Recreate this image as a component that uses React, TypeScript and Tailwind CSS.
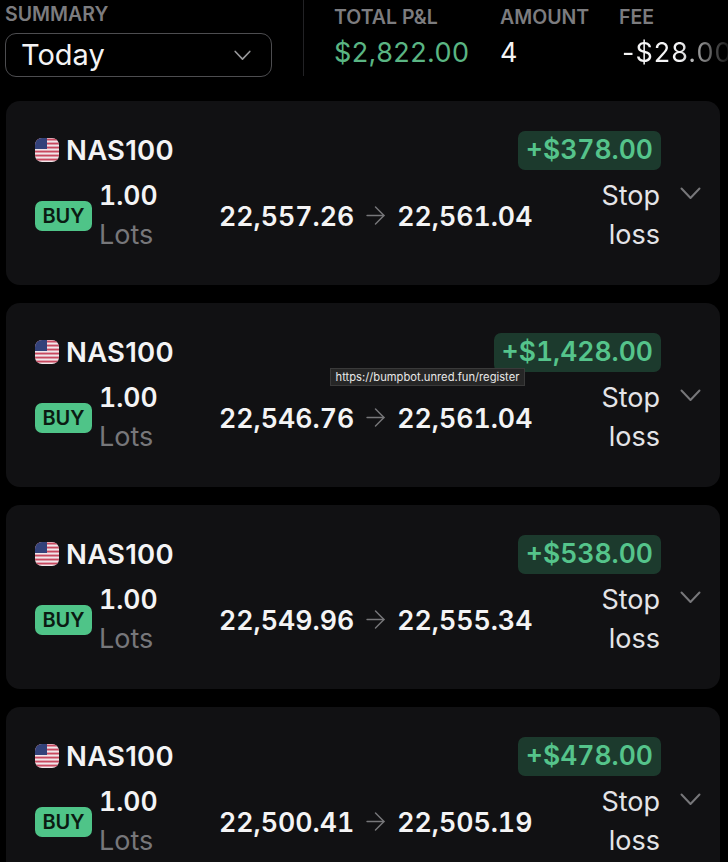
import { ArrowRight } from 'lucide-react';

interface Trade {
  pnl: string;
  open: string;
  close: string;
}

const trades: Trade[] = [
  { pnl: '+$378.00', open: '22,557.26', close: '22,561.04' },
  { pnl: '+$1,428.00', open: '22,546.76', close: '22,561.04' },
  { pnl: '+$538.00', open: '22,549.96', close: '22,555.34' },
  { pnl: '+$478.00', open: '22,500.41', close: '22,505.19' },
];

function Chevron({ className }: { className?: string }) {
  return (
    <svg viewBox="0 0 21 13" fill="none" className={className}>
      <path d="M1.5 1.5 L10.5 11 L19.5 1.5" stroke="currentColor" strokeWidth="2" strokeLinecap="round" strokeLinejoin="round" />
    </svg>
  );
}

function UsFlag() {
  return (
    <svg width="24" height="24" viewBox="0 0 24 24" className="shrink-0">
      <defs>
        <clipPath id="flagClip">
          <rect x="0" y="0" width="24" height="24" rx="7" />
        </clipPath>
      </defs>
      <g clipPath="url(#flagClip)">
        <rect width="24" height="24" fill="#f1e6ea" />
        {[0, 4, 8, 12, 16, 20].map((y) => (
          <rect key={y} x="0" y={y + 0.6} width="24" height="1.9" fill="#c8485f" />
        ))}
        <rect width="12" height="11" fill="#33427a" />
      </g>
    </svg>
  );
}

function TradeCard({ trade }: { trade: Trade }) {
  return (
    <div className="h-[184px] shrink-0 rounded-[14px] bg-[#111113] pl-[29px] pr-[19px] pt-[30px]">
      <div className="flex h-[39px] items-center justify-between pr-[40px]">
        <div className="flex items-center gap-[7px] pb-[2px]">
          <UsFlag />
          <span className="text-[27.5px] font-semibold leading-[36px] tracking-[0.25px] text-[#f4f4f5]">NAS100</span>
        </div>
        <span className="flex h-[39px] items-center rounded-[7px] bg-[#1c3a2d] px-[8px] pb-[2px] text-[26.5px] font-semibold tabular-nums text-[#55c48b]">
          {trade.pnl}
        </span>
      </div>
      <div className="mt-[6px] flex items-center">
        <span className="flex h-[30px] w-[57px] items-center justify-center rounded-[7px] bg-[#4fc488] text-[20px] font-semibold text-[#0b1a12]">
          BUY
        </span>
        <div className="ml-[7px] flex w-[120px] flex-col pb-[2px] text-[27px] leading-[39px]">
          <span className="text-[26.5px] font-semibold tabular-nums text-[#f4f4f5]">1.00</span>
          <span className="text-[#77777a]">Lots</span>
        </div>
        <div className="flex items-center text-[26.7px] font-semibold tabular-nums text-[#f4f4f5]">
          <span>{trade.open}</span>
          <ArrowRight className="mx-[7px] h-[29px] w-[29px] text-[#77777a]" strokeWidth={1.2} />
          <span>{trade.close}</span>
        </div>
        <div className="ml-auto flex items-start pb-[2px]">
          <div className="w-[65px] text-right text-[27px] leading-[39px] text-[#e4e4e7]">
            Stop
            <br />
            loss
          </div>
          <Chevron className="ml-[20px] mt-[11px] h-[13px] w-[21px] text-[#77777a]" />
        </div>
      </div>
    </div>
  );
}

export default function App() {
  return (
    <div className="relative h-[862px] w-[728px] overflow-hidden bg-black font-['Inter',sans-serif]">
      {/* Summary header */}
      <div className="flex h-[101px] pl-[5px]">
        <div className="w-[267px]">
          <div className="h-[33px] pt-[2px] text-[19.5px] font-semibold leading-[24px] text-[#7c7c7f]">SUMMARY</div>
          <div className="flex h-[44px] items-center justify-between rounded-[11px] border border-[#4d4d50] pl-[15px] pr-[20px]">
            <span className="text-[29px] text-[#f4f4f5]">Today</span>
            <Chevron className="h-[11px] w-[17px] text-[#98989b]" />
          </div>
        </div>
        <div className="ml-[31px] h-[76px] w-px bg-[#222225]" />
        <div className="ml-[30px] w-[166px]">
          <div className="pt-[5px] text-[19.5px] font-semibold leading-[24px] text-[#7c7c7f]">TOTAL P&amp;L</div>
          <div className="mt-[6px] text-[27px] leading-[36px] tracking-[0.4px] text-[#5ab583]">$2,822.00</div>
        </div>
        <div className="w-[119px]">
          <div className="pt-[5px] text-[19.5px] font-semibold leading-[24px] text-[#7c7c7f]">AMOUNT</div>
          <div className="mt-[6px] text-[27px] leading-[36px] text-[#f4f4f5]">4</div>
        </div>
        <div className="min-w-0 flex-1 overflow-hidden">
          <div className="pt-[5px] text-[19.5px] font-semibold leading-[24px] text-[#7c7c7f]">FEE</div>
          <div className="ml-[3px] mt-[6px] whitespace-nowrap bg-gradient-to-r from-[#f4f4f5] from-[55%] to-[#1a1a1a] bg-clip-text text-[27px] leading-[36px] tracking-[1px] text-transparent">
            -$28.00
          </div>
        </div>
      </div>

      {/* Trades */}
      <div className="flex flex-col gap-[18px] pl-[6px] pr-[8px]">
        {trades.map((trade) => (
          <TradeCard key={trade.open} trade={trade} />
        ))}
      </div>

      {/* Link tooltip */}
      <div className="absolute left-[330px] top-[368px] flex h-[18px] w-[195px] items-center justify-center border border-[#3a3a3a] bg-[#262626] text-[11.2px] text-[#e8e8e8]">
        https://bumpbot.unred.fun/register
      </div>
    </div>
  );
}
